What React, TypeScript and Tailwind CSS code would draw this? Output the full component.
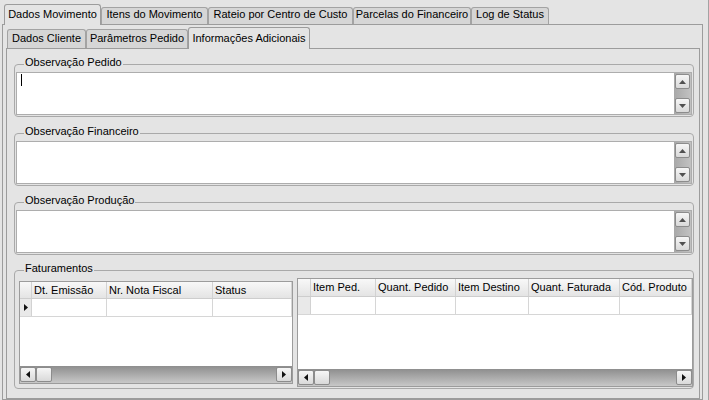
import React from 'react';

const topTabs = [
  { label: 'Dados Movimento', w: 'w-[97px]', active: true },
  { label: 'Itens do Movimento', w: 'w-[107px]', active: false },
  { label: 'Rateio por Centro de Custo', w: 'w-[145px]', active: false },
  { label: 'Parcelas do Financeiro', w: 'w-[118px]', active: false },
  { label: 'Log de Status', w: 'w-[78px]', active: false },
];

const innerTabs = [
  { label: 'Dados Cliente', w: 'w-[79px]', active: false },
  { label: 'Parâmetros Pedido', w: 'w-[102px]', active: false },
  { label: 'Informações Adicionais', w: 'w-[122px]', active: true },
];

const leftCols = [
  { label: 'Dt. Emissão', w: 'w-[75px]' },
  { label: 'Nr. Nota Fiscal', w: 'w-[106px]' },
  { label: 'Status', w: 'flex-1' },
];

const rightCols = [
  { label: 'Item Ped.', w: 'w-[65px]' },
  { label: 'Quant. Pedido', w: 'w-[80px]' },
  { label: 'Item Destino', w: 'w-[73px]' },
  { label: 'Quant. Faturada', w: 'w-[91px]' },
  { label: 'Cód. Produto', w: 'flex-1' },
];

function Tri({ dir, color = '#111' }: { dir: 'up' | 'down' | 'left' | 'right'; color?: string }) {
  if (dir === 'up') return <svg width="7" height="4"><path d="M0 4L3.5 0L7 4Z" fill={color} /></svg>;
  if (dir === 'down') return <svg width="7" height="4"><path d="M0 0L3.5 4L7 0Z" fill={color} /></svg>;
  if (dir === 'left') return <svg width="4" height="7"><path d="M4 0L0 3.5L4 7Z" fill={color} /></svg>;
  return <svg width="4" height="7"><path d="M0 0L4 3.5L0 7Z" fill={color} /></svg>;
}

function SBtn({ children, className = '' }: { children?: React.ReactNode; className?: string }) {
  return (
    <div className={`flex items-center justify-center rounded-[2px] border border-[#8c8c8c] bg-linear-to-b from-[#f6f6f6] to-[#d9d9d9] ${className}`}>
      {children}
    </div>
  );
}

function VScroll() {
  return (
    <div className="flex w-[17px] shrink-0 flex-col justify-between bg-linear-to-r from-[#a8a8a8] to-[#c2c2c2] p-px">
      <SBtn className="h-[15px]"><Tri dir="up" color="#505050" /></SBtn>
      <SBtn className="h-[15px]"><Tri dir="down" color="#505050" /></SBtn>
    </div>
  );
}

function HScroll() {
  return (
    <div className="flex h-[17px] shrink-0 bg-linear-to-b from-[#8e8e8e] to-[#c8c8c8] py-px">
      <SBtn className="w-[16px]"><Tri dir="left" /></SBtn>
      <SBtn className="w-[16px]" />
      <div className="flex-1" />
      <SBtn className="w-[16px]"><Tri dir="right" /></SBtn>
    </div>
  );
}

function Memo({ caret }: { caret?: boolean }) {
  return (
    <div className="flex h-[43px] border border-[#adadad] bg-white">
      <div className="flex-1">
        {caret && <div className="ml-[4px] mt-px h-[12px] w-px bg-black" />}
      </div>
      <VScroll />
    </div>
  );
}

function Group({ title, className = '', children }: { title: string; className?: string; children: React.ReactNode }) {
  return (
    <fieldset className={`rounded-[4px] border border-[#a9a9a9] pb-px pl-px pr-px ${className}`}>
      <legend className="ml-[8px] h-[16px] px-px leading-[13px]">{title}</legend>
      {children}
    </fieldset>
  );
}

function Grid({
  cols,
  ind,
  head,
  arrow,
  className,
}: {
  cols: { label: string; w: string }[];
  ind: string;
  head: string;
  arrow?: boolean;
  className: string;
}) {
  return (
    <div className={`flex shrink-0 flex-col border border-[#9c9c9c] bg-white ${className}`}>
      {/* cabeçalho */}
      <div className={`flex ${head} shrink-0 border-b border-[#cdcdcd] bg-linear-to-b from-[#f8f8f8] to-[#e4e4e4]`}>
        <div className={`${ind} shrink-0 border-r border-[#d2d2d2]`} />
        {cols.map((c) => (
          <div
            key={c.label}
            className={`${c.w} min-w-0 shrink-0 overflow-hidden whitespace-nowrap border-r border-[#d2d2d2] pl-[2px] pt-[2px] leading-[13px]`}
          >
            {c.label}
          </div>
        ))}
      </div>
      {/* linha vazia */}
      <div className="flex h-[18px] shrink-0 border-b border-[#d6d6d6]">
        <div className={`${ind} flex shrink-0 items-center justify-center border-r border-[#d2d2d2] bg-[#e9e9e9]`}>
          {arrow && <Tri dir="right" />}
        </div>
        {cols.map((c) => (
          <div key={c.label} className={`${c.w} min-w-0 shrink-0 border-r border-[#d6d6d6]`} />
        ))}
      </div>
      <div className="flex-1" />
      <HScroll />
    </div>
  );
}

export default function App() {
  return (
    <div className="flex h-[400px] w-[709px] flex-col overflow-hidden border-r border-[#a3a3a3] bg-[#e4e4e4] pl-[2px] pr-px pt-[4px] font-['Liberation_Sans',Arial,sans-serif] text-[11px] text-black">
      {/* Abas principais */}
      <div className="relative z-10 flex h-[20px] shrink-0 items-end pl-[2px]">
        {topTabs.map((t) =>
          t.active ? (
            <div
              key={t.label}
              className={`${t.w} -mb-px h-[21px] shrink-0 whitespace-nowrap rounded-t-[3px] border border-b-0 border-[#9c9c9c] bg-[#e4e4e4] pt-[3px] text-center leading-[13px]`}
            >
              {t.label}
            </div>
          ) : (
            <div
              key={t.label}
              className={`${t.w} h-[17px] shrink-0 whitespace-nowrap rounded-t-[3px] border border-b-0 border-[#a3a3a3] bg-[#d6d6d6] text-center leading-[13px]`}
            >
              {t.label}
            </div>
          )
        )}
      </div>

      <div className="mr-[4px] flex min-h-0 flex-1 flex-col border border-[#9c9c9c] bg-[#e4e4e4] pl-[3px] pr-[2px]">
        {/* Abas internas */}
        <div className="relative z-10 flex h-[23px] shrink-0 items-end pl-px">
          {innerTabs.map((t) =>
            t.active ? (
              <div
                key={t.label}
                className={`${t.w} -mb-px h-[22px] shrink-0 whitespace-nowrap rounded-t-[3px] border border-b-0 border-[#9c9c9c] bg-[#e4e4e4] pt-[4px] text-center leading-[13px]`}
              >
                {t.label}
              </div>
            ) : (
              <div
                key={t.label}
                className={`${t.w} h-[19px] shrink-0 whitespace-nowrap rounded-t-[3px] border border-b-0 border-[#a3a3a3] bg-[#d6d6d6] pt-[2px] text-center leading-[13px]`}
              >
                {t.label}
              </div>
            )
          )}
        </div>

        <div className="flex min-h-0 flex-1 flex-col border border-[#9c9c9c] pl-[7px] pr-[5px] pt-[7px]">
          <Group title="Observação Pedido">
            <Memo caret />
          </Group>
          <Group title="Observação Financeiro" className="mt-[8px]">
            <Memo />
          </Group>
          <Group title="Observação Produção" className="mt-[8px]">
            <Memo />
          </Group>

          <fieldset className="mt-[7px] rounded-[4px] border border-[#a9a9a9] pb-px pl-[4px]">
            <legend className="ml-[5px] h-[16px] px-px leading-[13px]">Faturamentos</legend>
            <div className="flex items-start gap-[4px]">
              <Grid cols={leftCols} ind="w-[12px]" head="h-[17px]" arrow className="mt-[3px] h-[103px] w-[274px]" />
              <Grid cols={rightCols} ind="w-[13px]" head="h-[18px]" className="h-[109px] flex-1" />
            </div>
          </fieldset>
        </div>
      </div>
    </div>
  );
}
